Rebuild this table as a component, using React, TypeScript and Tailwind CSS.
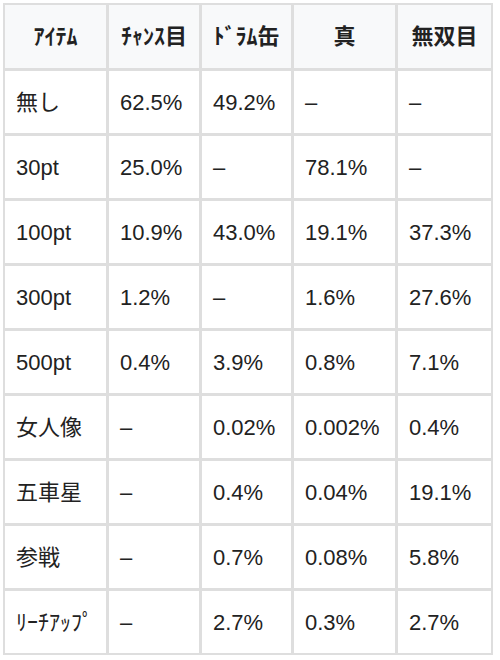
const headers = ['ｱｲﾃﾑ', 'ﾁｬﾝｽ目', 'ﾄﾞﾗﾑ缶', '真', '無双目']

const rows: string[][] = [
  ['無し', '62.5%', '49.2%', '–', '–'],
  ['30pt', '25.0%', '–', '78.1%', '–'],
  ['100pt', '10.9%', '43.0%', '19.1%', '37.3%'],
  ['300pt', '1.2%', '–', '1.6%', '27.6%'],
  ['500pt', '0.4%', '3.9%', '0.8%', '7.1%'],
  ['女人像', '–', '0.02%', '0.002%', '0.4%'],
  ['五車星', '–', '0.4%', '0.04%', '19.1%'],
  ['参戦', '–', '0.7%', '0.08%', '5.8%'],
  ['ﾘｰﾁｱｯﾌﾟ', '–', '2.7%', '0.3%', '2.7%'],
]

export default function App() {
  return (
    <div className="w-[500px] h-[660px] bg-white pt-[3px] pl-[3px] font-['Liberation_Sans','Noto_Sans_CJK_JP',sans-serif] text-[22px] text-[#222]">
      <div className="inline-grid grid-cols-[101px_90px_89px_101px_93px] gap-[3px] bg-[#dedede] p-[2px]">
        {headers.map((h) => (
          <div key={h} className="h-[63px] bg-[#f8f9fa] flex items-center justify-center font-bold">
            {h}
          </div>
        ))}
        {rows.map((r) =>
          r.map((c, i) => (
            <div key={r[0] + i} className="h-[62px] bg-white flex items-center pl-[11px] whitespace-nowrap">
              {c}
            </div>
          ))
        )}
      </div>
    </div>
  )
}
